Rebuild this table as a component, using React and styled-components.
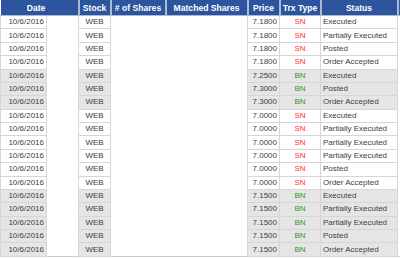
import React from "react";
import styled, { createGlobalStyle } from "styled-components";

const Global = createGlobalStyle`
  html, body { margin: 0; padding: 0; background: #fff; }
  body { font-family: "Liberation Sans", Arial, sans-serif; }
`;

const Table = styled.table`
  border-collapse: collapse;
  table-layout: fixed;
  width: 400px;
  font-family: "Liberation Sans", Arial, sans-serif;
  border-bottom: 1px solid #c8c8c8;
`;

const Th = styled.th`
  background: #2d559d;
  color: #fff;
  font-weight: bold;
  font-size: 8.6px;
  height: 15px;
  padding: 0 ${(p) => p.$padR || 0}px 0 0;
  text-align: center;
  border-right: 2px solid #a9b9d6;
  border-bottom: 1px solid #a9b9d6;
  &:last-child { border-right: none; }
`;

const Row = styled.tr`
  height: 13.39px;
`;

const Td = styled.td`
  height: 12.39px;
  line-height: 12px;
  padding: 0 2px;
  font-size: 8px;
  color: #404040;
  white-space: nowrap;
  overflow: hidden;
  text-align: ${(p) => p.$align || "center"};
  background: ${(p) => (p.$shade ? "#e5e5e5" : "#fff")};
  border: 1px solid #d6d6d6;
`;

const Blank = styled.td`
  padding: 0;
  background: #fff;
  border: none;
  border-right: ${(p) => (p.$line ? "1px solid #d6d6d6" : "none")};
`;

const Trx = styled.span`
  color: ${(p) => (p.$type === "SN" ? "#ff3030" : "#2a9a2a")};
`;

const rows = [
  ["7.1800", "SN", "Executed", false],
  ["7.1800", "SN", "Partially Executed", false],
  ["7.1800", "SN", "Posted", false],
  ["7.1800", "SN", "Order Accepted", false],
  ["7.2500", "BN", "Executed", true],
  ["7.3000", "BN", "Posted", true],
  ["7.3000", "BN", "Order Accepted", true],
  ["7.0000", "SN", "Executed", false],
  ["7.0000", "SN", "Partially Executed", false],
  ["7.0000", "SN", "Partially Executed", false],
  ["7.0000", "SN", "Partially Executed", false],
  ["7.0000", "SN", "Posted", false],
  ["7.0000", "SN", "Order Accepted", false],
  ["7.1500", "BN", "Executed", true],
  ["7.1500", "BN", "Partially Executed", true],
  ["7.1500", "BN", "Partially Executed", true],
  ["7.1500", "BN", "Posted", true],
  ["7.1500", "BN", "Order Accepted", true],
];

export default function App() {
  return (
    <>
      <Global />
      <Table>
        <colgroup>
          <col style={{ width: 46 }} />
          <col style={{ width: 32 }} />
          <col style={{ width: 32 }} />
          <col style={{ width: 55 }} />
          <col style={{ width: 82 }} />
          <col style={{ width: 32 }} />
          <col style={{ width: 41 }} />
          <col style={{ width: 77 }} />
          <col style={{ width: 3 }} />
        </colgroup>
        <thead>
          <tr>
            <Th colSpan={2} $padR={6}>Date</Th>
            <Th>Stock</Th>
            <Th># of Shares</Th>
            <Th>Matched Shares</Th>
            <Th>Price</Th>
            <Th>Trx Type</Th>
            <Th>Status</Th>
            <Th />
          </tr>
        </thead>
        <tbody>
          {rows.map(([price, trx, status, shade], i) => (
            <Row key={i}>
              <Td $shade={shade} $align="right">10/6/2016</Td>
              <Blank $line />
              <Td $shade={shade}>WEB</Td>
              <Blank />
              <Blank $line />
              <Td $shade={shade} $align="right">{price}</Td>
              <Td $shade={shade}>
                <Trx $type={trx}>{trx}</Trx>
              </Td>
              <Td $shade={shade} $align="left">{status}</Td>
              <Blank />
            </Row>
          ))}
        </tbody>
      </Table>
    </>
  );
}
